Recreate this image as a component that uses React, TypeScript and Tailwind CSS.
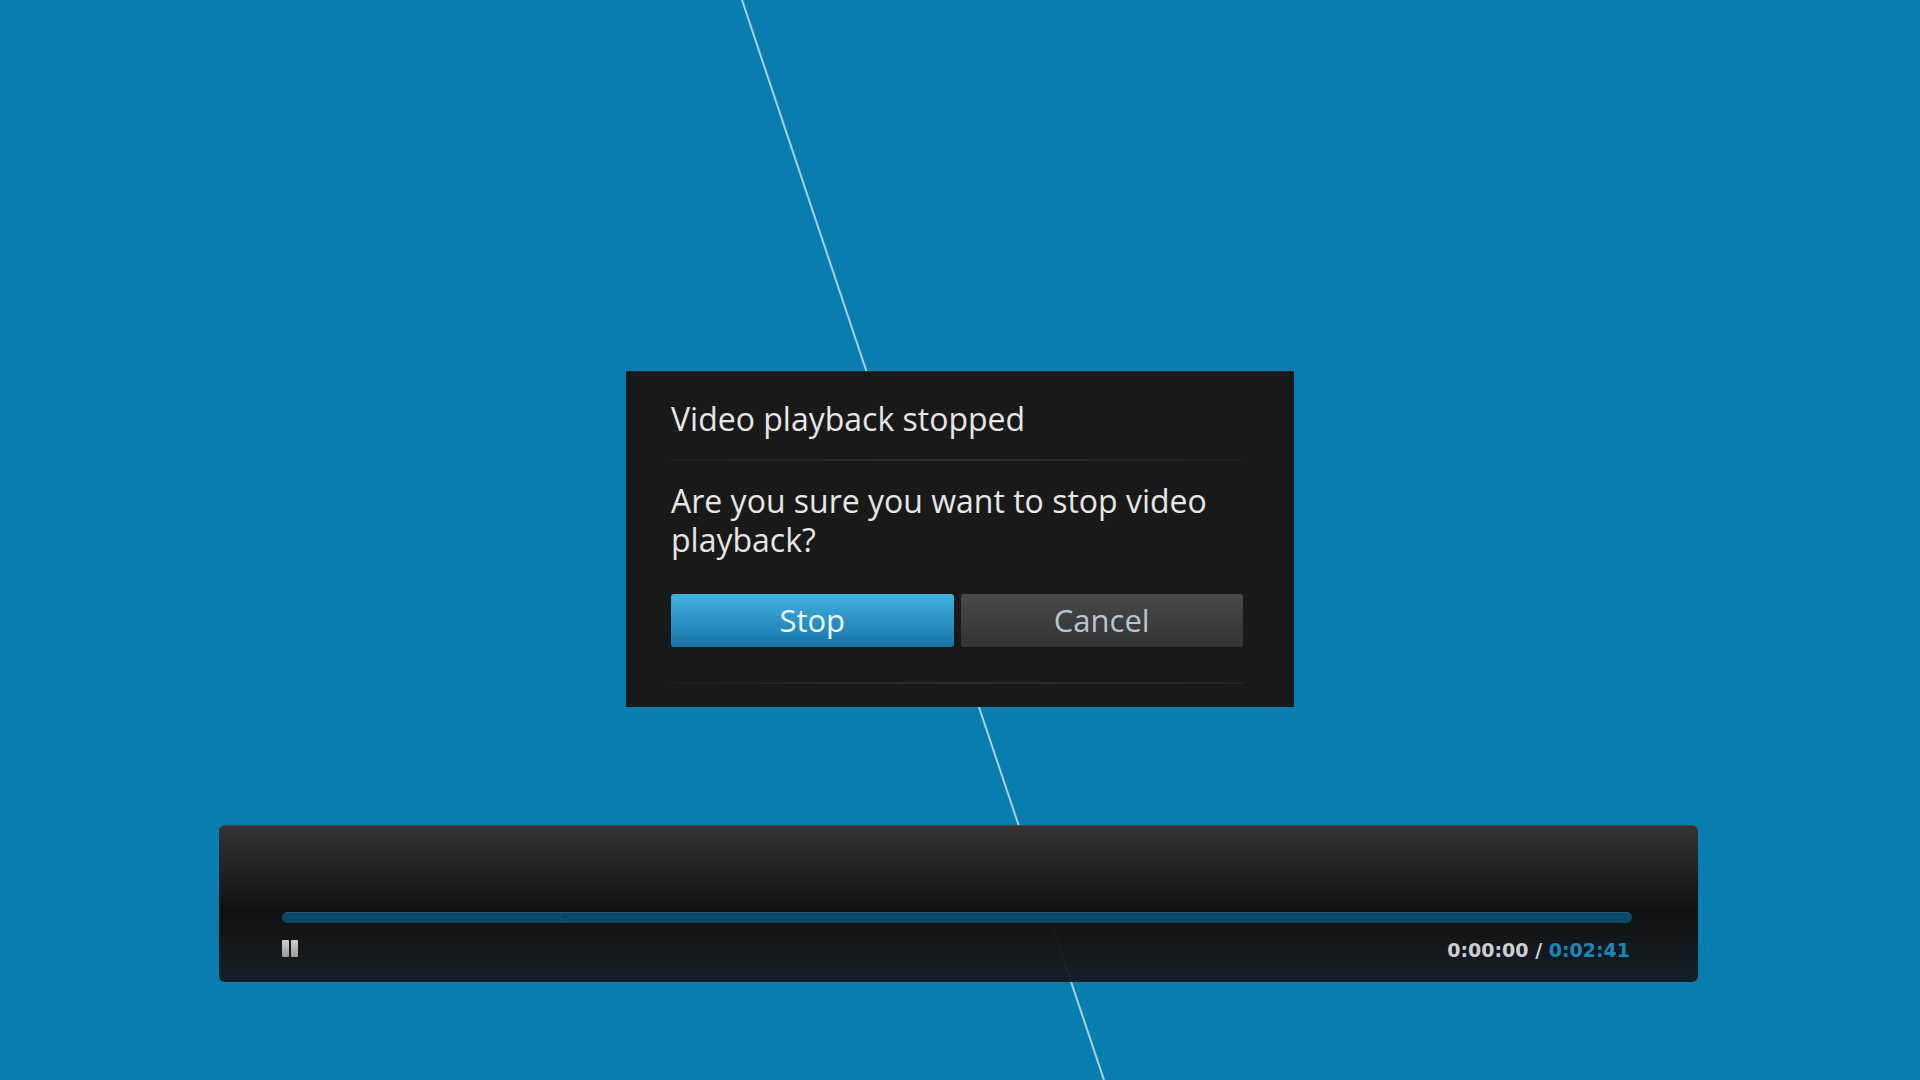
import React from 'react';

/**
 * Stop-playback confirmation over the video player
 */
const PauseIcon: React.FC = () => (
  <div className="flex gap-[2px] h-[17px]">
    <div className="w-[7px] h-full rounded-[1px] bg-gradient-to-b from-[#d0d0d0] to-[#9a9a9a]" />
    <div className="w-[7px] h-full rounded-[1px] bg-gradient-to-b from-[#d0d0d0] to-[#9a9a9a]" />
  </div>
);

const App: React.FC = () => {
  return (
    <div className="relative w-full h-screen overflow-hidden bg-[#0a7db0] font-['Open_Sans',sans-serif]">
      {/* diagonal background line */}
      <svg className="absolute inset-0 w-full h-full" viewBox="0 0 1920 1080">
        <line x1="742" y1="0" x2="1104" y2="1080" stroke="#a9d0e0" strokeWidth="2" />
      </svg>

      <div className="relative flex flex-col items-start">
        {/* dialog */}
        <div className="mt-[371px] ml-[626px] w-[668px] h-[336px] bg-[#191919] border-t border-[#2c2c2c] pl-[45px] pr-[51px] pt-[29px] flex flex-col">
          <h2 className="text-[32px] leading-[36px] text-[#e6e6e6]">Video playback stopped</h2>
          <div className="mt-[22px] h-[2px] bg-gradient-to-r from-[#1e1e1e] via-[#2e2e2e] to-[#1e1e1e]" />
          <p className="mt-[20px] text-[32px] leading-[39px] text-[#e6e6e6]">
            Are you sure you want to stop video playback?
          </p>
          <div className="mt-[35px] flex gap-[7px]">
            <button className="w-[283px] h-[53px] rounded-[3px] bg-gradient-to-b from-[#40b2e2] to-[#1574a6] text-[31px] text-[#eef7fb]">
              Stop
            </button>
            <button className="w-[283px] h-[53px] rounded-[3px] bg-gradient-to-b from-[#494949] to-[#333333] text-[31px] text-[#b4c6d4]">
              Cancel
            </button>
          </div>
          <div className="mt-[35px] h-[2px] bg-gradient-to-r from-[#1c1c1c] via-[#2d2d2d] to-[#222222]" />
        </div>

        {/* player bar */}
        <div className="mt-[118px] ml-[219px] w-[1479px] h-[157px] rounded-[6px] border-t border-[#474747] bg-gradient-to-b from-[#343434] via-[#111111] via-55% to-[rgba(20,22,27,0.9)] pl-[63px] pr-[66px] pt-[86px]">
          <div className="relative h-[11px] rounded-full bg-[#0b4766] border-t border-[#1b5b7b]">
            <div className="absolute left-[279px] top-0 w-[1px] h-full bg-[#13557a]" />
          </div>
          <div className="mt-[17px] flex items-start justify-between">
            <PauseIcon />
            <div className="-mt-[2px] mr-[2px] font-['DejaVu_Sans',sans-serif] font-bold text-[19px] leading-[24px]">
              <span className="text-[#cfcfcf]">0:00:00 / </span>
              <span className="text-[#1a87b8]">0:02:41</span>
            </div>
          </div>
        </div>
      </div>
    </div>
  );
};

export default App;
